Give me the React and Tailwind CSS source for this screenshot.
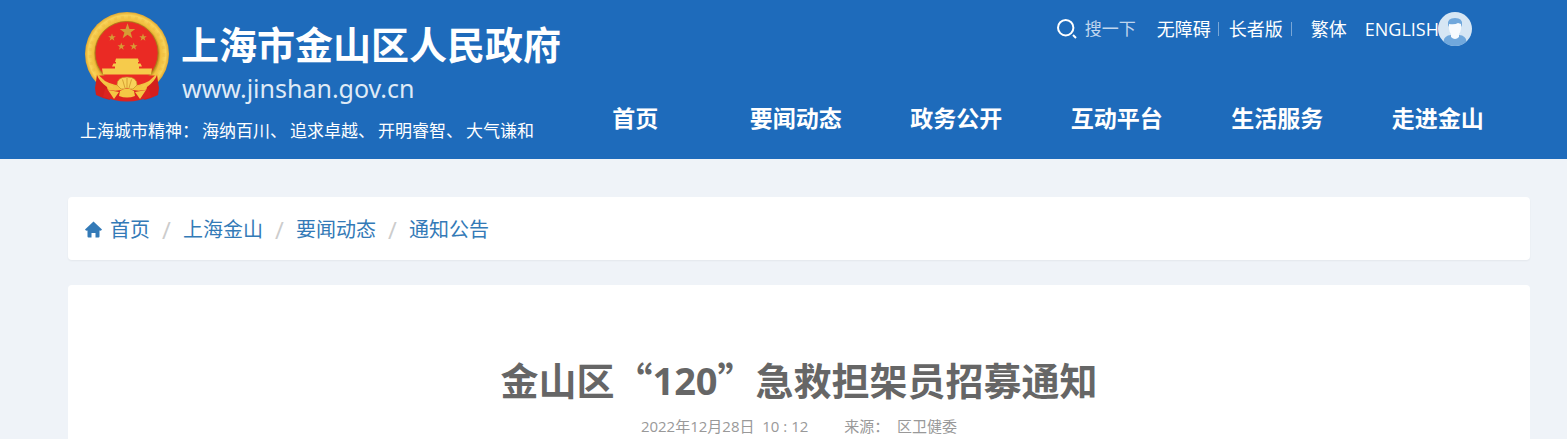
import React from "react";

const STAR = "M0 -10 2.4 -3.1 9.5 -3.1 3.8 1.2 5.9 8.1 0 4 -5.9 8.1 -3.8 1.2 -9.5 -3.1 -2.4 -3.1Z";

const SPIRIT = ["上海城市精神：", "海纳百川、", "追求卓越、", "开明睿智、", "大气谦和"];
const NAV = ["首页", "要闻动态", "政务公开", "互动平台", "生活服务", "走进金山"];
const CRUMBS = ["首页", "上海金山", "要闻动态", "通知公告"];

function Emblem() {
  return (
    <svg viewBox="0 0 84 90" className="h-[90px] w-[84px] shrink-0" aria-hidden="true">
      <defs>
        <radialGradient id="gold" cx="50%" cy="50%" r="50%">
          <stop offset="74%" stopColor="#b98a1c" />
          <stop offset="80%" stopColor="#f0bd3c" />
          <stop offset="92%" stopColor="#f9d45a" />
          <stop offset="100%" stopColor="#e2a72e" />
        </radialGradient>
      </defs>
      <circle cx="42" cy="42" r="42" fill="url(#gold)" />
      <circle cx="42" cy="42" r="37" fill="none" stroke="#e9ad30" strokeWidth="3" strokeDasharray="3 4" opacity="0.25" />
      <circle cx="41.600" cy="41" r="31.500" fill="#ea2a24" stroke="#a9761b" strokeWidth="0.800" />
      <g fill="#d69b35">
        <path d={STAR} transform="translate(42.500 19.500) scale(.82)" />
        <path d={STAR} transform="translate(27 25.500) scale(.4)" />
        <path d={STAR} transform="translate(58 25.500) scale(.4)" />
        <path d={STAR} transform="translate(36.300 34.500) scale(.4)" />
        <path d={STAR} transform="translate(48.700 34.500) scale(.4)" />
      </g>
      <path d="M31 46.500H53L54 50H30ZM31 50H53V51.500H31ZM28.500 51.500H55.500L57 54.500H27ZM30 54.500H54V57H30ZM17 56.500H67L66 62.500H18Z" fill="#f6cb4b" />
      <path d="M14 63.500H70L64 69Q55 74 42 74T20 69Z" fill="#ea2a24" />
      <path d="M11 62Q17 71 28 76L42 72 56 76Q67 71 73 62L73 74Q59 86 42 86T11 74Z" fill="#f4c33f" />
      <path d="M32 73Q32 65 42 65T52 73L48 77H36Z" fill="#f8d25a" stroke="#c58b22" strokeWidth="0.700" />
      <path d="M42 66V76M37.500 67.500 40 76M46.500 67.500 44 76" stroke="#c58b22" strokeWidth="0.700" />
      <path d="M12 63Q14 69 22 75L25 88 18 86 11 83 10 76ZM72 63Q70 69 62 75L59 88 66 86 73 83 74 76Z" fill="#d31f1c" />
      <path d="M20 77Q32 81 42 76 52 81 64 77L66 85 55 88Q42 91 29 88L18 85Z" fill="#dc2420" />
      <path d="M23 78 34 80 29 87ZM61 78 50 80 55 87ZM35 79Q42 74 49 79L50 84Q42 87 34 84Z" fill="#f4c744" />
    </svg>
  );
}

function SearchIcon() {
  return (
    <svg viewBox="0 0 20 20" className="h-5 w-5 shrink-0" fill="none" stroke="#fff" strokeWidth="2" aria-hidden="true">
      <circle cx="8.700" cy="8.700" r="7.700" />
      <path d="M16 16 19 19" />
    </svg>
  );
}

function Avatar() {
  return (
    <svg viewBox="0 0 34 34" className="h-[34px] w-[34px]" aria-hidden="true">
      <circle cx="17" cy="17" r="17" fill="#d6e6f4" />
      <path d="M5.500 29.500Q6 23.500 13 23H21Q28 23.500 28.500 29.500 24 34 17 34T5.500 29.500Z" fill="#71a8dc" />
      <path d="M13 22H21V25Q17 29 13 25Z" fill="#f7fbfe" />
      <path d="M10 13Q9 6 17 6T24 13L23 15H11Z" fill="#71a8dc" />
      <path d="M11 12Q17 13 20 11L23 12V17Q22 23.500 17 24 12 23.500 11 17Z" fill="#f7fbfe" />
    </svg>
  );
}

function HomeIcon() {
  return (
    <svg viewBox="0 0 17 17" className="h-[17px] w-[17px]" fill="#337ab7" aria-hidden="true">
      <path d="M8.500 0.500 17 8.500Q16.500 10 14.500 9.500V15.500Q14.500 16.500 13.500 16.500H10.500V12H6.500V16.500H3.500Q2.500 16.500 2.500 15.500V9.500Q.5 10 0 8.500Z" />
    </svg>
  );
}

export default function App() {
  return (
    <div className="flex min-h-screen flex-col bg-[#eff3f8] font-['Open_Sans','Noto_Sans_CJK_SC',sans-serif]">
      <header className="flex bg-[#1e6bbb] pr-[49px] pb-4 whitespace-nowrap text-white">
        <div className="w-[555px] shrink-0 pt-3 pl-20">
          <a href="#home" className="flex gap-3 pl-[5px]">
            <Emblem />
            <span className="flex flex-col pt-[6px]">
              <span className="font-['Noto_Sans_CJK_SC',sans-serif] text-[38px] leading-[50px] font-bold">上海市金山区人民政府</span>
              <span className="pl-[1px] font-['Noto_Sans',sans-serif] text-[25px] leading-10 text-[#dfeaf6]">www.jinshan.gov.cn</span>
            </span>
          </a>
          <p className="mt-[11px] flex gap-[3px] text-[17px] leading-6">
            {SPIRIT.map((s) => (
              <span key={s}>{s}</span>
            ))}
          </p>
        </div>
        <div className="flex min-w-0 flex-1 flex-col pt-3">
          <div className="flex h-[34px] items-center justify-end pr-[46px] text-lg">
            <label className="flex items-center gap-2">
              <SearchIcon />
              <input
                type="text"
                aria-label="搜一下"
                placeholder="搜一下"
                className="w-[72px] bg-transparent text-[17px] outline-none placeholder:text-[#c0d6ee]"
              />
            </label>
            <a href="#accessible">无障碍</a>
            <span className="mr-[10px] ml-[7px] h-[14px] w-px bg-[#78a6d6]" />
            <a href="#elder">长者版</a>
            <span className="mr-[19px] ml-2 h-[14px] w-px bg-[#78a6d6]" />
            <a href="#traditional">繁体</a>
            <a href="#english" className="ml-[18px]">ENGLISH</a>
            <a href="#account" aria-label="账户" className="-ml-px">
              <Avatar />
            </a>
          </div>
          <nav className="mt-[54px] grid grid-cols-6 text-center text-[23px] leading-9 font-bold">
            {NAV.map((n) => (
              <a key={n} href={"#" + n}>{n}</a>
            ))}
          </nav>
        </div>
      </header>

      <main className="flex flex-1 flex-col gap-[25px] pt-[38px] pr-[37px] pl-[68px]">
        <nav className="rounded bg-white px-[17px] pt-[17px] pb-[15px] shadow-xs">
          <ol className="flex items-center text-xl leading-[31px] text-[#337ab7]">
            {CRUMBS.map((c, i) => (
              <li key={c} className="flex items-center">
                {i > 0 && <span className="w-[33px] text-center text-2xl leading-[31px] text-[#ccc]">/</span>}
                <a href={"#" + c} className="flex items-center gap-2">
                  {i === 0 && <HomeIcon />}
                  {c}
                </a>
              </li>
            ))}
          </ol>
        </nav>
        <article className="flex-1 rounded-t bg-white pt-[66px] text-center">
          <h1 className="font-['Noto_Sans_CJK_SC',sans-serif] text-[38px] leading-[56px] font-bold text-[#666]">
            金山区“<span className="font-['Open_Sans',sans-serif]">120</span>”急救担架员招募通知
          </h1>
          <div className="mt-2 flex justify-center gap-9 text-[15px] leading-5 text-[#999]">
            <time>2022年12月28日&nbsp; 10 : 12</time>
            <span>来源：&nbsp; 区卫健委</span>
          </div>
        </article>
      </main>
    </div>
  );
}
